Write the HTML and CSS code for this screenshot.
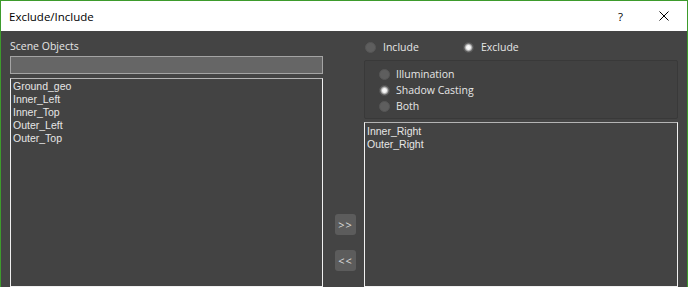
FILE: index.html
```html
<!DOCTYPE html>
<html lang="en">
<head>
    <meta charset="UTF-8">
    <meta name="viewport" content="width=device-width, initial-scale=1.0">
    <title>Exclude/Include</title>
    <link rel="stylesheet" href="styles.css">
</head>
<body>
    <div class="window">
        <!-- Barra de titulo -->
        <div class="titlebar">
            <span class="title">Exclude/Include</span>
            <span class="help">?</span>
            <span class="close">
                <svg width="10" height="10" viewBox="0 0 10 10">
                    <path d="M0.5 0.5 L9.5 9.5 M9.5 0.5 L0.5 9.5" stroke="#000" stroke-width="1" fill="none"/>
                </svg>
            </span>
        </div>

        <div class="content">
            <!-- Columna izquierda -->
            <div class="left">
                <div class="label">Scene Objects</div>
                <div class="search"></div>
                <div class="list list-left">
                    <div class="item">Ground_geo</div>
                    <div class="item">Inner_Left</div>
                    <div class="item">Inner_Top</div>
                    <div class="item">Outer_Left</div>
                    <div class="item">Outer_Top</div>
                </div>
            </div>

            <!-- Botones del medio -->
            <div class="middle">
                <button class="move">&gt;&gt;</button>
                <button class="move">&lt;&lt;</button>
            </div>

            <!-- Columna derecha -->
            <div class="right">
                <div class="mode-row">
                    <label class="radio-item wide"><span class="radio"></span>Include</label>
                    <label class="radio-item"><span class="radio checked"></span>Exclude</label>
                </div>
                <div class="group">
                    <label class="radio-item"><span class="radio"></span>Illumination</label>
                    <label class="radio-item"><span class="radio checked"></span>Shadow Casting</label>
                    <label class="radio-item"><span class="radio"></span>Both</label>
                </div>
                <div class="list list-right">
                    <div class="item">Inner_Right</div>
                    <div class="item">Outer_Right</div>
                </div>
            </div>
        </div>
    </div>
</body>
</html>
```

FILE: styles.css
```css
body {
    margin: 0;
    font-family: "Open Sans", "Noto Sans", sans-serif;
    font-size: 10.5px;
    background-color: #444;
    overflow: hidden;
}
.window {
    height: 287px;
    border: 1px solid #3d9b2c;
    border-bottom: none;
    box-sizing: border-box;
    display: flex;
    flex-direction: column;
}
/* Barra de titulo */
.titlebar {
    height: 30px;
    flex-shrink: 0;
    background: #fff;
    display: flex;
    align-items: center;
    padding-left: 8px;
    color: #000;
    font-size: 11.5px;
}
.title {
    flex: 1;
}
.help {
    width: 10px;
    margin-right: 31px;
}
.close {
    display: flex;
    margin-right: 18px;
}
.content {
    flex: 1;
    display: flex;
    background: #444;
    padding: 0 9px;
    color: #e6e6e6;
    overflow: hidden;
}
.left {
    width: 313px;
    display: flex;
    flex-direction: column;
}
.label {
    height: 25px;
    box-sizing: border-box;
    padding-top: 9px;
    line-height: 13px;
}
.search {
    height: 18px;
    box-sizing: border-box;
    border: 1px solid #a4a4a4;
    background: #666;
}
.list {
    flex: 1;
    border: 1px solid #f0f0f0;
    border-top-color: #b4b4b4;
    background: #434343;
    padding-left: 2px;
    font-family: "Liberation Sans", Arial, sans-serif;
    font-size: 10.5px;
}
.list-left {
    margin-top: 4px;
    padding-top: 1px;
}
.list-right {
    margin-top: 3px;
    padding-top: 2px;
}
.item {
    line-height: 13px;
    white-space: nowrap;
}
.middle {
    width: 41px;
    display: flex;
    flex-direction: column;
    gap: 15px;
    padding-top: 183px;
    padding-left: 12px;
    box-sizing: border-box;
}
.move {
    width: 21px;
    height: 21px;
    padding: 0;
    border: none;
    border-radius: 3px;
    background: #5c5c5c;
    color: #dcdcdc;
    font-family: inherit;
    font-size: 11px;
    letter-spacing: 1px;
    cursor: pointer;
}
.right {
    width: 314px;
    display: flex;
    flex-direction: column;
}
.mode-row {
    height: 29px;
    box-sizing: border-box;
    padding-top: 3px;
    padding-left: 1px;
    display: flex;
    align-items: center;
}
.radio-item {
    display: flex;
    align-items: center;
    gap: 7px;
    line-height: 16px;
}
.radio-item.wide {
    width: 98px;
}
.radio {
    width: 11px;
    height: 11px;
    border-radius: 50%;
    background: #5e5e5e;
    box-sizing: border-box;
    border: 1px solid #565656;
}
.radio.checked {
    background: radial-gradient(circle, #ffffff 0, #f2f2f2 2px, #b8b8b8 3px, #5e5e5e 4.5px);
}
.group {
    height: 59px;
    box-sizing: border-box;
    border: 1px solid #393939;
    border-radius: 2px;
    background: #414141;
    padding: 5px 0 0 14px;
}
.group .radio-item {
    gap: 6px;
}
```
